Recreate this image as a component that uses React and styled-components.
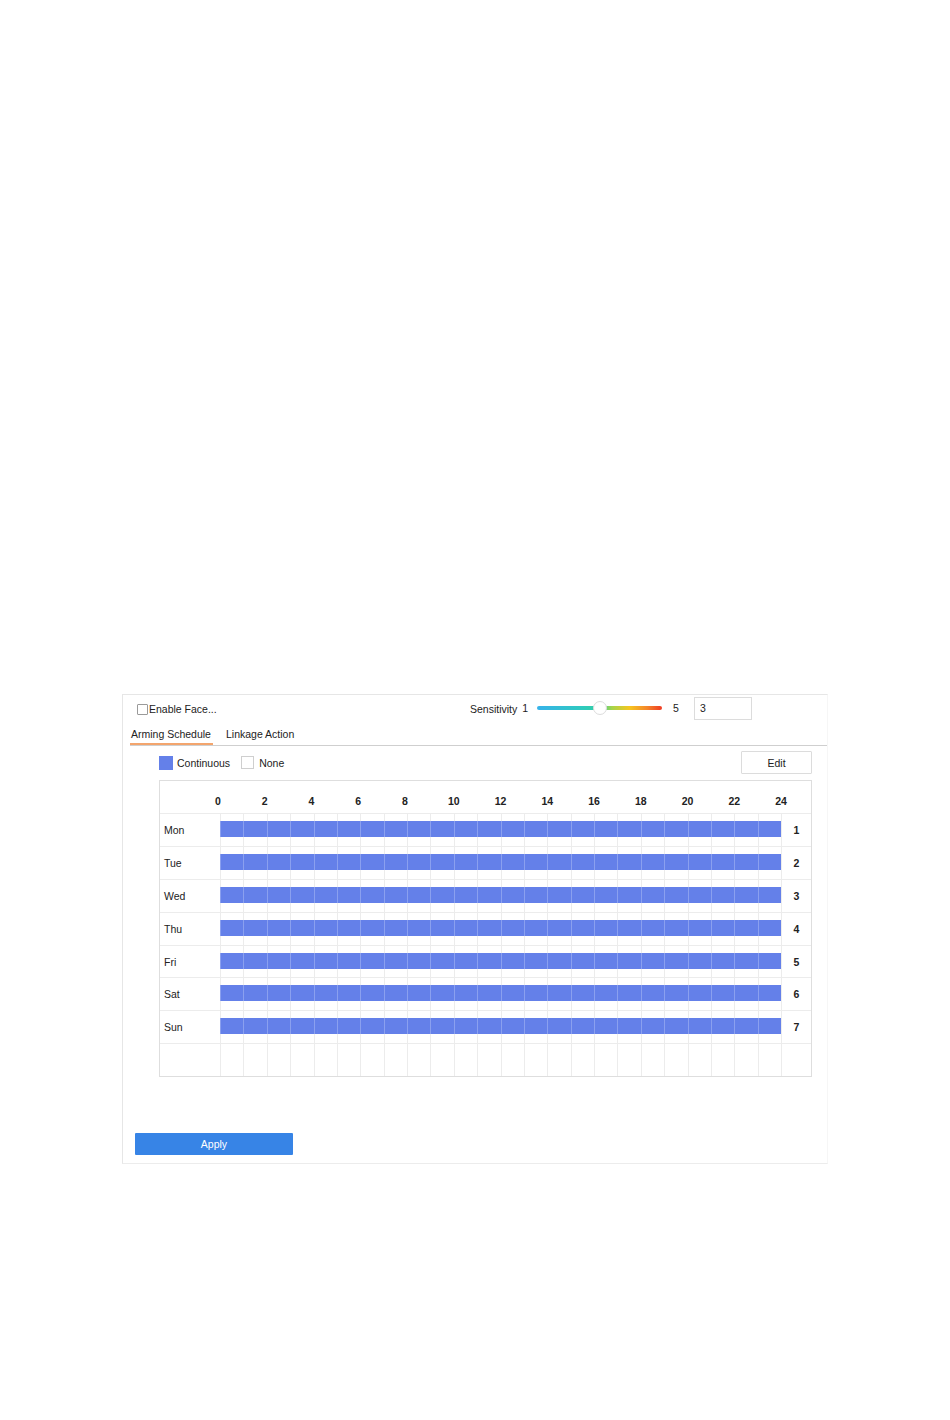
import React from "react";
import styled, { createGlobalStyle } from "styled-components";

const GlobalStyle = createGlobalStyle`
  body {
    margin: 0;
    background: #fff;
    font-family: "Liberation Sans", Arial, sans-serif;
    font-size: 10.5px;
    color: #222;
  }
`;

const Page = styled.div`
  width: 950px;
  height: 1420px;
  padding: 694px 0 0 122px;
  box-sizing: border-box;
`;

const Panel = styled.div`
  width: 706px;
  box-sizing: border-box;
  border-top: 1px solid #e6e6e6;
  border-left: 1px solid #e6e6e6;
  border-bottom: 1px solid #ececec;
  border-right: 1px solid #f6f6f6;
  padding-bottom: 8px;
`;

const TopRow = styled.div`
  height: 26px;
  display: flex;
  align-items: center;
  padding-left: 14px;
`;

const EnableGroup = styled.label`
  width: 333px;
  display: flex;
  align-items: center;
  gap: 1px;
  padding-top: 2px;
`;

const Check = styled.span`
  width: 9px;
  height: 9px;
  border: 1px solid #9a9a9a;
  border-radius: 1px;
  background: #fff;
`;

const SensGroup = styled.div`
  display: flex;
  align-items: center;
`;

const Plain = styled.span`
  margin-right: ${(p) => p.$mr || 0}px;
`;

const SensText = styled.span`
  margin-right: ${(p) => p.$mr || 0}px;
  padding-top: 2px;
`;

const Track = styled.div`
  position: relative;
  width: 125px;
  height: 4px;
  border-radius: 2px;
  margin-right: 11px;
  background: linear-gradient(
    90deg,
    #37b2ea 0%,
    #2fc9c0 35%,
    #33d0a2 50%,
    #a6d44b 60%,
    #f6c61f 74%,
    #f4862a 88%,
    #ef3b23 100%
  );
`;

const Thumb = styled.span`
  position: absolute;
  top: 50%;
  width: 14px;
  height: 14px;
  border-radius: 50%;
  background: #fff;
  border: 1px solid #dcdcdc;
  box-sizing: border-box;
  transform: translate(-50%, -50%);
`;

const ValueBox = styled.div`
  width: 58px;
  height: 23px;
  box-sizing: border-box;
  border: 1px solid #dcdcdc;
  padding-left: 5px;
  display: flex;
  align-items: center;
`;

const TabBar = styled.div`
  margin-left: 7px;
  height: 24px;
  display: flex;
  gap: 12px;
  border-bottom: 1px solid #cfcfcf;
`;

const Tab = styled.div`
  display: flex;
  align-items: center;
  padding: 3px 2px 0 1px;
  border-bottom: 2px solid ${(p) => (p.$active ? "#f3a56d" : "transparent")};
`;

const Content = styled.div`
  padding: 0 15px 0 36px;
`;

const LegendRow = styled.div`
  display: flex;
  align-items: center;
  justify-content: space-between;
  margin-top: 5px;
`;

const Legend = styled.div`
  display: flex;
  align-items: center;
`;

const Swatch = styled.span`
  width: ${(p) => (p.$filled ? 14 : 13)}px;
  height: ${(p) => (p.$filled ? 14 : 13)}px;
  box-sizing: border-box;
  background: ${(p) => (p.$filled ? "#6480e9" : "#fff")};
  border: 1px solid ${(p) => (p.$filled ? "#6480e9" : "#cfcfcf")};
  margin-right: ${(p) => (p.$filled ? 4 : 5)}px;
`;

const EditButton = styled.button`
  width: 71px;
  height: 23px;
  border: 1px solid #dcdcdc;
  background: #fff;
  font: inherit;
  color: #222;
  padding: 0;
  border-radius: 1px;
`;

const Table = styled.div`
  width: 653px;
  box-sizing: border-box;
  margin-top: 6px;
  border: 1px solid #dedede;
`;

const HeaderRow = styled.div`
  height: 32px;
  display: grid;
  grid-template-columns: 36.6px repeat(13, 46.75px) 1fr;
  align-items: center;
  font-weight: bold;
  padding-top: 8px;
  box-sizing: border-box;
`;

const HourLabel = styled.span`
  text-align: center;
  transform: translateX(${(p) => (p.$single ? -2 : 0)}px);
`;

const DayRow = styled.div`
  height: 32.9px;
  box-sizing: border-box;
  border-top: 1px solid #ececec;
  display: grid;
  grid-template-columns: 60px repeat(24, 1fr) 30px;
`;

const DayLabel = styled.div`
  display: flex;
  align-items: center;
  padding-left: 4px;
`;

const HourCell = styled.div`
  border-left: 1px solid #ececec;
  display: flex;
  align-items: flex-start;
`;

const Bar = styled.div`
  width: 100%;
  height: 16px;
  margin-top: 7px;
  background: #6480e9;
  box-shadow: -1px 0 0 #8aa0ef;
`;

const NumCell = styled.div`
  border-left: 1px solid #ececec;
  display: flex;
  align-items: center;
  justify-content: center;
  font-weight: bold;
`;

const ApplyButton = styled.button`
  margin: 56px 0 0 12px;
  width: 158px;
  height: 22px;
  border: none;
  border-radius: 1px;
  background: #3784e6;
  color: #fff;
  font: inherit;
  padding: 0;
`;

const days = ["Mon", "Tue", "Wed", "Thu", "Fri", "Sat", "Sun"];
const hours = Array.from({ length: 13 }, (_, i) => i * 2);
const cells = Array.from({ length: 24 }, (_, i) => i);

export default function App() {
  return (
    <>
      <GlobalStyle />
      <Page>
        <Panel>
          <TopRow>
            <EnableGroup>
              <Check />
              <span>Enable Face...</span>
            </EnableGroup>
            <SensGroup>
              <SensText $mr={5}>Sensitivity</SensText>
              <Plain $mr={9}>1</Plain>
              <Track>
                <Thumb style={{ left: `${((3 - 1) / 4) * 100}%` }} />
              </Track>
              <Plain $mr={15}>5</Plain>
              <ValueBox>3</ValueBox>
            </SensGroup>
          </TopRow>

          <TabBar>
            <Tab $active>Arming Schedule</Tab>
            <Tab>Linkage Action</Tab>
          </TabBar>

          <Content>
            <LegendRow>
              <Legend>
                <Swatch $filled />
                <Plain $mr={11}>Continuous</Plain>
                <Swatch />
                <span>None</span>
              </Legend>
              <EditButton>Edit</EditButton>
            </LegendRow>

            <Table>
              <HeaderRow>
                <span />
                {hours.map((h) => (
                  <HourLabel key={h} $single={h < 10}>
                    {h}
                  </HourLabel>
                ))}
              </HeaderRow>
              {days.map((d, i) => (
                <DayRow key={d}>
                  <DayLabel>{d}</DayLabel>
                  {cells.map((c) => (
                    <HourCell key={c}>
                      <Bar />
                    </HourCell>
                  ))}
                  <NumCell>{i + 1}</NumCell>
                </DayRow>
              ))}
              <DayRow>
                <DayLabel />
                {cells.map((c) => (
                  <HourCell key={c} />
                ))}
                <NumCell />
              </DayRow>
            </Table>
          </Content>

          <ApplyButton>Apply</ApplyButton>
        </Panel>
      </Page>
    </>
  );
}
